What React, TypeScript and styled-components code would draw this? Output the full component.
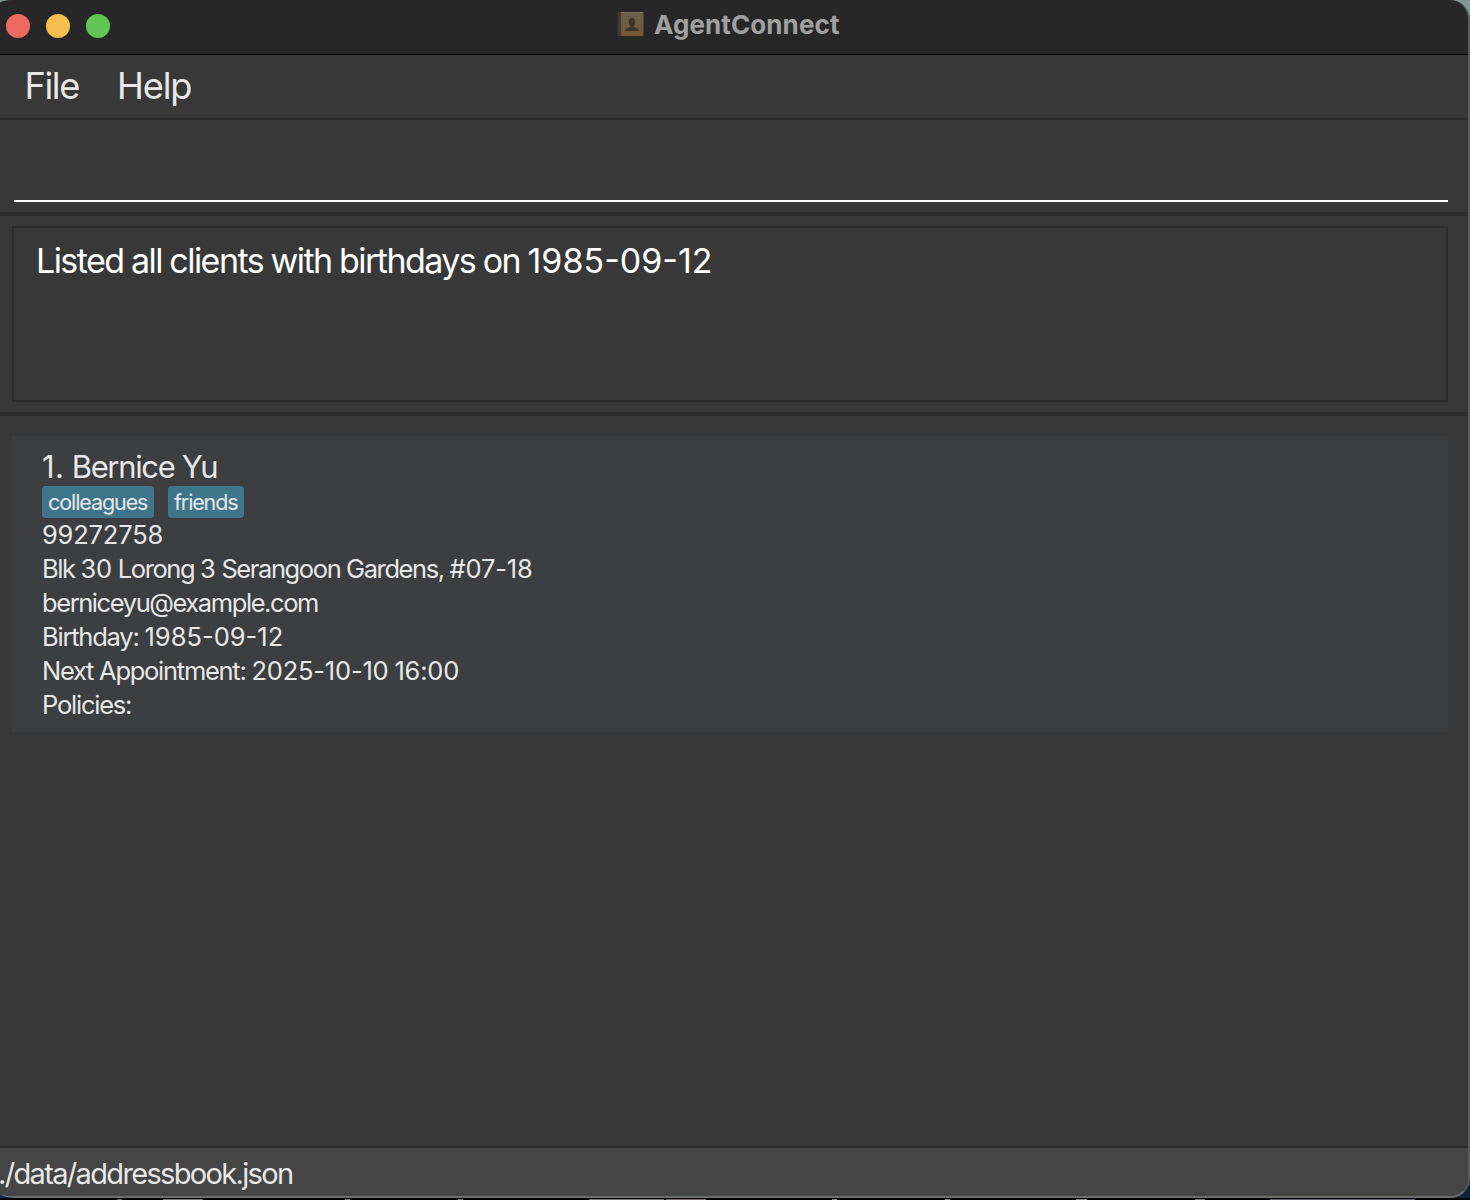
import React from "react";
import styled, { createGlobalStyle } from "styled-components";

const GlobalStyle = createGlobalStyle`
  * { box-sizing: border-box; }
  body { margin: 0; background: #05070b; }
`;

const Desktop = styled.div`
  width: 1470px;
  height: 1200px;
  overflow: hidden;
  display: flex;
  flex-direction: column;
  background: linear-gradient(#7d9a9a 0 60px, #0d2342 1100px 1198px, #000 1198px);
  font-family: Inter, "Liberation Sans", sans-serif;
`;

const Window = styled.main`
  height: 1198px;
  flex: none;
  display: flex;
  flex-direction: column;
  overflow: hidden;
  background: #383838;
  border-right: 2px solid #5c5c5c;
  border-bottom: 2px solid #6e6e6e;
  border-top-left-radius: 14px 3px;
  border-top-right-radius: 20px;
  border-bottom-right-radius: 20px;
  border-bottom-left-radius: 14px 5px;
`;

const TitleBar = styled.header`
  height: 55px;
  flex: none;
  display: grid;
  grid-template-columns: 616px auto 1fr;
  background: #272727;
  border-bottom: 1px solid #000;
`;

const Lights = styled.div`
  display: flex;
  gap: 16px;
  padding: 14px 0 0 6px;
`;

const Light = styled.span<{ $color: string }>`
  width: 24px;
  height: 24px;
  border-radius: 50%;
  background: ${(p) => p.$color};
`;

const Title = styled.div`
  display: flex;
  gap: 10px;
  padding-top: 10px;
`;

const Line = styled.span<{
  $size: number;
  $track?: number;
  $space?: number;
  $height: number;
  $weight?: number;
  $color?: string;
}>`
  display: block;
  white-space: pre;
  font-size: ${(p) => p.$size}px;
  line-height: ${(p) => p.$height}px;
  letter-spacing: ${(p) => p.$track ?? 0}px;
  word-spacing: ${(p) => p.$space ?? 0}px;
  font-weight: ${(p) => p.$weight ?? 400};
  color: ${(p) => p.$color ?? "#e8e8e8"};
`;

const Figures = styled.span<{ $track: number }>`
  letter-spacing: ${(p) => p.$track}px;
`;

const MenuBar = styled.nav`
  height: 65px;
  flex: none;
  display: flex;
  gap: 38px;
  padding: 9px 24.5px;
  border-bottom: 2px solid #2b2b2b;
`;

const CommandPane = styled.section`
  height: 96px;
  flex: none;
  padding: 0 20px 10px 14px;
  border-bottom: 4px solid #2b2b2b;
`;

const CommandField = styled.div`
  height: 82px;
  border-bottom: 2px solid #fff;
`;

const ResultPane = styled.section`
  height: 200px;
  flex: none;
  padding: 10px 20px 10px 12px;
  border-bottom: 4px solid #2b2b2b;
`;

const ResultBox = styled.div`
  height: 176px;
  padding: 12px 22px;
  border: 2px solid #2b2b2b;
`;

const ListPane = styled.section`
  flex: 1;
  padding: 20px 20px 0 12px;
`;

const Card = styled.article`
  height: 296px;
  padding: 12px 30px;
  background: #3c3e3f;
`;

const Tags = styled.div`
  display: flex;
  gap: 14px;
`;

const Tag = styled.span<{ $width: number }>`
  width: ${(p) => p.$width}px;
  height: 32px;
  padding-left: 6px;
  border-radius: 4px;
  background: #3f758a;
`;

const StatusBar = styled.footer`
  height: 50px;
  flex: none;
  padding-top: 6px;
  text-indent: -2px;
  background: #454545;
  border-top: 2px solid #2b2b2b;
`;

const Strip = styled.div`
  height: 2px;
  padding-top: 1px;
  display: flex;
  background: #000;
`;

const Chip = styled.i<{ $left: number; $width: number; $color: string }>`
  height: 1px;
  width: ${(p) => p.$width}px;
  margin-left: ${(p) => p.$left}px;
  background: ${(p) => p.$color};
`;

const BookIcon = () => (
  <svg width="28" height="28" viewBox="0 0 28 28">
    <defs>
      <linearGradient id="cover" x1="0" y1="0" x2="0" y2="1">
        <stop offset="0" stopColor="#6c5f4e" />
        <stop offset="1" stopColor="#735931" />
      </linearGradient>
    </defs>
    <rect x="1.5" y="2" width="26" height="25" rx="1" fill="#2c2720" />
    <rect x="1.5" y="2" width="4" height="24" fill="#403c3a" />
    <rect x="5" y="2" width="22.5" height="24" rx="1" fill="url(#cover)" />
    <path d="M5 2h22v1h-22z" fill="#7d725f" />
    <path d="M9 21c.2-2 1.500-2.600 4.300-3.400 1.200-.4 1.300-1.300.7-2.200-.9-1.200-1.100-2.300-1.100-3.700 0-2.300 1.200-3.700 3.100-3.700s3.100 1.400 3.100 3.700c0 1.400-.2 2.500-1.100 3.700-.6.900-.5 1.800.7 2.200 2.800.8 4.100 1.400 4.300 3.400z" fill="#3d3327" />
  </svg>
);

/* Numbers are set with looser tracking than the words around them. */
const withFigures = (text: string, track = -0.1) =>
  text.split(/([#\d][\d:.-]*)/).map((part, i) =>
    i % 2 ? <Figures key={i} $track={track}>{part}</Figures> : part
  );

const details = [
  { text: "99272758", track: -0.2, figures: -0.2 },
  { text: "Blk 30 Lorong 3 Serangoon Gardens, #07-18", track: -1.4, figures: -0.15 },
  { text: "berniceyu@example.com", track: -1.42, figures: 0 },
  { text: "Birthday: 1985-09-12", track: -1.22, figures: 0 },
  { text: "Next Appointment: 2025-10-10 16:00", track: -1.27, figures: -0.2 },
  { text: "Policies:", track: -1.22, figures: 0 },
];

const chips = [
  [117, 5, "#666"], [41, 40, "#777"], [142, 5, "#777"], [108, 5, "#777"],
  [126, 75, "#777"], [2, 40, "#776b6b"], [126, 5, "#888"], [108, 5, "#888"], [126, 11, "#888"], [108, 10, "#777"],
  [65, 145, "#667"],
] as const;

export default function App() {
  return (
    <Desktop>
      <GlobalStyle />
      <Window>
        <TitleBar>
          <Lights>
            <Light $color="#ed6a5e" />
            <Light $color="#f5bf4f" />
            <Light $color="#61c554" />
          </Lights>
          <Title>
            <BookIcon />
            <Line $size={26} $height={30} $track={0.1} $weight={700} $color="#a0a0a0">AgentConnect</Line>
          </Title>
        </TitleBar>
        <MenuBar>
          <Line $size={36.2} $height={45} $track={-1.4}>File</Line>
          <Line $size={36.2} $height={45} $track={-1.1}>Help</Line>
        </MenuBar>
        <CommandPane><CommandField /></CommandPane>
        <ResultPane>
          <ResultBox>
            <Line $size={34} $height={42} $track={-1.55} $space={-0.55} $color="#fff">
              {withFigures("Listed all clients with birthdays on 1985-09-12", 0)}
            </Line>
          </ResultBox>
        </ResultPane>
        <ListPane>
          <Card>
            <Line $size={31} $height={38} $track={-1.35}>{withFigures("1. Bernice Yu", 0.4)}</Line>
            <Tags>
              <Tag $width={112}><Line $size={21.5} $height={33} $track={-1.08}>colleagues</Line></Tag>
              <Tag $width={76}><Line $size={21.5} $height={33} $track={-1.13}>friends</Line></Tag>
            </Tags>
            {details.map((d) => (
              <Line key={d.text} $size={25.5} $height={34} $track={d.track}>{withFigures(d.text, d.figures)}</Line>
            ))}
          </Card>
        </ListPane>
        <StatusBar>
          <Line $size={29} $height={40} $track={-1.66}>./data/addressbook.json</Line>
        </StatusBar>
      </Window>
      <Strip>
        {chips.map(([left, width, color], i) => (
          <Chip key={i} $left={left} $width={width} $color={color} />
        ))}
      </Strip>
    </Desktop>
  );
}
